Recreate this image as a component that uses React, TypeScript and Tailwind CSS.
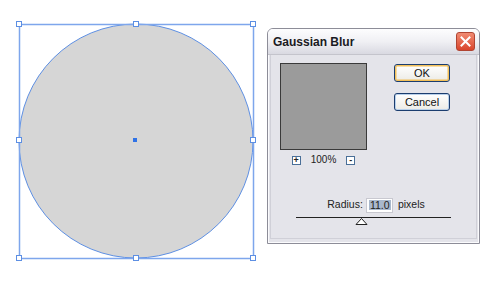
import React from "react";

export default function App() {
  const handles = [
    [19, 24], [136, 24], [253, 24],
    [19, 140], [253, 140],
    [19, 258], [136, 258], [253, 258],
  ];
  return (
    <div className="relative w-[500px] h-[281px] bg-white overflow-hidden" style={{ fontFamily: '"Liberation Sans", Arial, sans-serif' }}>
      <svg className="absolute left-0 top-0" width="270" height="281" viewBox="0 0 270 281">
        <circle cx="136" cy="141" r="117" fill="#d6d6d6" stroke="#5d8fe3" strokeWidth="1" />
        <rect x="19.5" y="24.5" width="234" height="234" fill="none" stroke="#7ea6ec" strokeWidth="1.5" />
        {handles.map(([x, y], i) => (
          <rect key={i} x={x - 2.5} y={y - 2.5} width="5" height="5" fill="#fff" stroke="#5d8fe3" strokeWidth="1" />
        ))}
        <rect x="133" y="138" width="4" height="4" fill="#2f72e6" />
      </svg>

      <div className="absolute left-[267px] top-[28px] w-[213px] h-[216px] flex flex-col rounded-t-[6px] border border-[#8d8d98] bg-[#e4e4ea] shadow-[inset_0_0_0_1px_#fbfbfd]">
        <div className="h-[26px] flex items-center justify-between pl-[5px] pr-[4px] rounded-t-[5px] bg-gradient-to-b from-[#fdfdfe] via-[#f0f0f4] to-[#d9d9e1] border-b border-[#c4c4cc]">
          <span className="text-[12px] font-bold text-[#1a1a22]">Gaussian Blur</span>
          <div className="w-[19px] h-[19px] rounded-[3px] bg-gradient-to-b from-[#f08a72] to-[#d9432a] border border-[#b04432] flex items-center justify-center">
            <svg width="11" height="11" viewBox="0 0 11 11">
              <path d="M1.5 1.5 L9.5 9.5 M9.5 1.5 L1.5 9.5" stroke="#fff" strokeWidth="2" strokeLinecap="square" />
            </svg>
          </div>
        </div>
        <div className="flex-1 flex flex-col pl-[9px] pr-[12px] pt-[8px] pb-[4px] border-x border-b border-[#d0d0d8] mx-[2px] mb-[4px]">
          <div className="flex justify-between">
            <div className="flex flex-col items-center w-[87px]">
              <div className="w-[87px] h-[87px] bg-[#9b9b9b] border border-[#3a3a3a]" />
              <div className="flex items-center gap-[10px] mt-[5px] text-[10px] text-[#222]">
                <div className="w-[9px] h-[9px] border border-[#4a6f98] bg-white flex items-center justify-center text-[9px] leading-none font-bold">+</div>
                <span className="leading-none">100%</span>
                <div className="w-[9px] h-[9px] border border-[#4a6f98] bg-white flex items-center justify-center text-[9px] leading-none font-bold">-</div>
              </div>
            </div>
            <div className="flex flex-col gap-[11px] pt-[1px] mr-[14px]">
              <div className="w-[56px] h-[18px] rounded-[3px] border border-[#1b3d6f] bg-gradient-to-b from-white to-[#ecebe6] shadow-[inset_0_0_0_1.5px_#f2c05a] flex items-center justify-center text-[11px] text-[#111]">OK</div>
              <div className="w-[56px] h-[18px] rounded-[3px] border border-[#1b3d6f] bg-gradient-to-b from-white to-[#ecebe6] shadow-[inset_0_0_0_1px_#b9d0ea] flex items-center justify-center text-[11px] text-[#111]">Cancel</div>
            </div>
          </div>
          <div className="flex-1" />
          <div className="flex items-center justify-center gap-[3px] text-[10.5px] text-[#222] mb-[4px] ml-[8px]">
            <span>Radius:</span>
            <div className="w-[27px] h-[15px] bg-white border border-[#c8c8d0] flex items-center pl-[2px]">
              <span className="bg-[#a9b8cc] leading-none px-[1px]">11.0</span>
            </div>
            <span className="ml-[2px]">pixels</span>
          </div>
          <div className="h-px bg-[#222] ml-[16px] mr-[13px]" />
          <div className="flex pl-[75px] h-[8px]">
            <svg width="13" height="7" viewBox="0 0 13 7">
              <path d="M6.5 0.5 L12 6.5 L1 6.5 Z" fill="#fff" stroke="#222" strokeWidth="1" />
            </svg>
          </div>
          <div className="h-[8px]" />
        </div>
      </div>
    </div>
  );
}
